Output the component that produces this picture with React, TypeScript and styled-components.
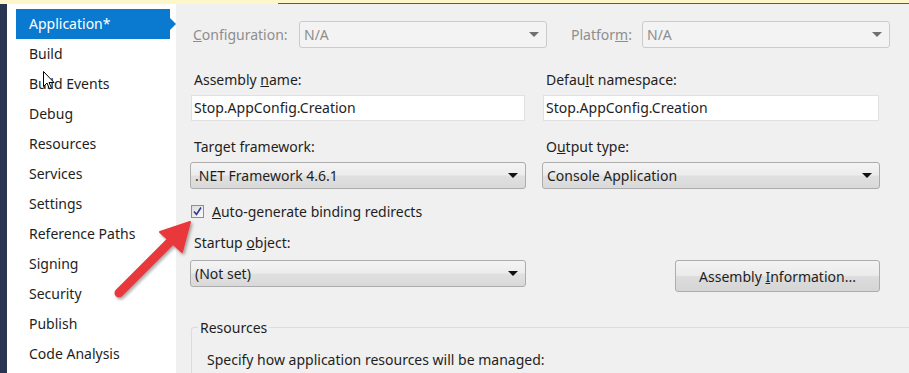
import styled, { createGlobalStyle } from 'styled-components';

const GlobalStyle = createGlobalStyle`
  html, body {
    margin: 0;
    padding: 0;
    background: #f0f0f0;
    overflow: hidden;
  }
  body {
    font-family: 'Noto Sans', 'Open Sans', sans-serif;
    font-size: 14px;
    color: #1e1e1e;
  }
`;

const NAV_ITEMS = [
  'Application*',
  'Build',
  'Build Events',
  'Debug',
  'Resources',
  'Services',
  'Settings',
  'Reference Paths',
  'Signing',
  'Security',
  'Publish',
  'Code Analysis',
];

const Page = styled.div`
  position: relative;
  width: 909px;
  height: 373px;
  overflow: hidden;
  display: flex;
  flex-direction: column;
`;

const TopBar = styled.div`
  display: flex;
  height: 4px;
  flex-shrink: 0;
`;

const TopSegment = styled.div<{ $edge?: boolean }>`
  background: #fcf6c9;
  flex: ${p => (p.$edge ? 1 : '0 0 278px')};
  border-bottom: ${p => (p.$edge ? '1px solid #5c5a48' : '1px solid #fcf6c9')};
`;

const Body = styled.div`
  flex: 1;
  display: flex;
  min-height: 0;
`;

const DarkStrip = styled.div`
  width: 7px;
  background: #293550;
  flex-shrink: 0;
`;

const Sidebar = styled.nav`
  width: 169px;
  flex-shrink: 0;
  background: #ffffff;
  padding: 5px 0 0 9px;
  box-sizing: border-box;
  display: flex;
  flex-direction: column;
`;

const NavItem = styled.div<{ $active?: boolean }>`
  position: relative;
  height: 30px;
  line-height: 30px;
  padding-left: 13px;
  width: 154px;
  box-sizing: border-box;
  font-size: 14px;
  color: ${p => (p.$active ? '#ffffff' : '#1e1e1e')};
  background: ${p => (p.$active ? '#0a7ad0' : 'transparent')};

  &::after {
    content: '';
    display: ${p => (p.$active ? 'block' : 'none')};
    position: absolute;
    right: -6px;
    top: 9px;
    border-top: 6px solid transparent;
    border-bottom: 6px solid transparent;
    border-left: 6px solid #0a7ad0;
  }
`;

const Main = styled.main`
  flex: 1;
  padding: 17px 0 0 14px;
  display: flex;
  flex-direction: column;
`;

const ConfigRow = styled.div`
  display: flex;
  align-items: center;
  height: 26px;
`;

const DimLabel = styled.span<{ $width: number }>`
  width: ${p => p.$width}px;
  padding-left: 3px;
  color: #8e8e8e;
  box-sizing: border-box;
`;

const Separator = styled.div`
  height: 1px;
  background: #a3a3a3;
  margin: 15px 0 0 1px;
`;

const Grid = styled.div`
  display: grid;
  grid-template-columns: 336px 338px;
  column-gap: 16px;
  margin-top: 8px;
`;

const Field = styled.div`
  display: flex;
  flex-direction: column;
`;

const Label = styled.label<{ $gap?: number }>`
  height: 20px;
  line-height: 20px;
  padding-left: 4px;
  margin: 0 0 ${p => p.$gap ?? 5}px;
`;

const TextBox = styled.div`
  height: 26px;
  line-height: 24px;
  box-sizing: border-box;
  background: #ffffff;
  border: 1px solid #e1e1e1;
  margin: 0 1px;
  padding-left: 2px;
  white-space: nowrap;
`;

const Combo = styled.div<{ $disabled?: boolean; $width?: number }>`
  display: flex;
  align-items: center;
  justify-content: space-between;
  height: 27px;
  box-sizing: border-box;
  width: ${p => (p.$width ? `${p.$width}px` : 'auto')};
  padding: 0 7px 0 4px;
  border-radius: 3px;
  border: 1px solid ${p => (p.$disabled ? '#cbcbcb' : '#acacac')};
  color: ${p => (p.$disabled ? '#8e8e8e' : '#1e1e1e')};
  background: ${p =>
    p.$disabled
      ? '#f3f3f3'
      : 'linear-gradient(#f4f4f4 0%, #ececec 48%, #e0e0e0 52%, #d9d9d9 100%)'};
`;

const Caret = styled.span<{ $disabled?: boolean }>`
  width: 0;
  height: 0;
  border-left: 5px solid transparent;
  border-right: 5px solid transparent;
  border-top: 5px solid ${p => (p.$disabled ? '#707070' : '#111111')};
`;

const Gap = styled.div<{ $w: number }>`
  width: ${p => p.$w}px;
  flex-shrink: 0;
`;

const Spacer = styled.div<{ $h: number }>`
  height: ${p => p.$h}px;
`;

const CheckRow = styled.div`
  display: flex;
  align-items: center;
  height: 20px;
  margin-top: 12px;
  padding-left: 1px;
  gap: 8px;
`;

const CheckBox = styled.span`
  width: 13px;
  height: 13px;
  box-sizing: border-box;
  border: 1px solid #8e8f8f;
  background: linear-gradient(135deg, #dcdcdc, #fbfbfb);
  display: flex;
  align-items: center;
  justify-content: center;
`;

const RightCell = styled.div`
  display: flex;
  justify-content: flex-end;
  align-items: flex-start;
  padding-top: 71px;
`;

const Button = styled.div`
  width: 205px;
  height: 32px;
  box-sizing: border-box;
  border: 1px solid #adadad;
  border-radius: 3px;
  background: linear-gradient(#f3f3f3 0%, #ebebeb 48%, #dddddd 52%, #d5d5d5 100%);
  display: flex;
  align-items: center;
  justify-content: center;
`;

const Group = styled.fieldset`
  margin: 26px 0 0 1px;
  padding: 13px 0 20px 15px;
  border: 1px solid #dcdcdc;
  border-right: none;
  border-radius: 3px 0 0 0;
  min-width: 0;
`;

const Legend = styled.legend`
  padding: 0 2px;
  margin-left: -9px;
`;

const Overlay = styled.svg`
  position: absolute;
  left: 0;
  top: 0;
  pointer-events: none;
`;

const Cursor = styled.svg`
  position: absolute;
  left: 43px;
  top: 71px;
  pointer-events: none;
`;

function Key({ children }: { children: string }) {
  return <u>{children}</u>;
}

export default function App() {
  return (
    <>
      <GlobalStyle />
      <Page>
        <TopBar>
          <TopSegment />
          <TopSegment $edge />
        </TopBar>
        <Body>
          <DarkStrip />
          <Sidebar>
            {NAV_ITEMS.map((item, i) => (
              <NavItem key={item} $active={i === 0}>
                {item}
              </NavItem>
            ))}
          </Sidebar>
          <Main>
            <ConfigRow>
              <DimLabel $width={109}>
                <Key>C</Key>onfiguration:
              </DimLabel>
              <Combo $disabled $width={248}>
                <span>N/A</span>
                <Caret $disabled />
              </Combo>
              <Gap $w={21} />
              <DimLabel $width={74}>
                Platfor<Key>m</Key>:
              </DimLabel>
              <Combo $disabled $width={248}>
                <span>N/A</span>
                <Caret $disabled />
              </Combo>
            </ConfigRow>
            <Separator />
            <Grid>
              <Field>
                <Label>
                  Assembly <Key>n</Key>ame:
                </Label>
                <TextBox>Stop.AppConfig.Creation</TextBox>
              </Field>
              <Field>
                <Label>
                  Defau<Key>l</Key>t namespace:
                </Label>
                <TextBox>Stop.AppConfig.Creation</TextBox>
              </Field>

              <Field>
                <Spacer $h={16} />
                <Label>
                  Tar<Key>g</Key>et framework:
                </Label>
                <Combo>
                  <span>.NET Framework 4.6.1</span>
                  <Caret />
                </Combo>
              </Field>
              <Field>
                <Spacer $h={16} />
                <Label>
                  O<Key>u</Key>tput type:
                </Label>
                <Combo>
                  <span>Console Application</span>
                  <Caret />
                </Combo>
              </Field>

              <Field>
                <CheckRow>
                  <CheckBox>
                    <svg width="9" height="9" viewBox="0 0 9 9">
                      <path d="M1 4.5 L3.5 7.5 L8 0.5" fill="none" stroke="#2b3a8c" strokeWidth="1.6" />
                    </svg>
                  </CheckBox>
                  <span>
                    <Key>A</Key>uto-generate binding redirects
                  </span>
                </CheckRow>
                <Spacer $h={12} />
                <Label $gap={7}>
                  Startup <Key>o</Key>bject:
                </Label>
                <Combo>
                  <span>(Not set)</span>
                  <Caret />
                </Combo>
              </Field>
              <RightCell>
                <Button>
                  <span>
                    Assembly <Key>I</Key>nformation...
                  </span>
                </Button>
              </RightCell>
            </Grid>
            <Group>
              <Legend>Resources</Legend>
              Specify how application resources will be managed:
            </Group>
          </Main>
        </Body>

        <Overlay width="909" height="373" viewBox="0 0 909 373">
          <defs>
            <filter id="shadow" x="-20%" y="-20%" width="140%" height="140%">
              <feDropShadow dx="1.5" dy="2" stdDeviation="1.5" floodColor="#000" floodOpacity="0.35" />
            </filter>
          </defs>
          <g filter="url(#shadow)">
            <line x1="119" y1="293" x2="172" y2="240" stroke="#e8393b" strokeWidth="9" strokeLinecap="round" />
            <polygon points="190,222 182,252 160,232" fill="#e8393b" strokeLinejoin="round" stroke="#e8393b" strokeWidth="2" />
          </g>
        </Overlay>

        <Cursor width="13" height="20" viewBox="0 0 13 20">
          <path d="M0.5 0.5 L0.5 15.5 L4 12 L6.5 18 L8.5 17 L6 11.5 L11 11.5 Z" fill="#ffffff" stroke="#000000" strokeWidth="1" />
        </Cursor>
      </Page>
    </>
  );
}
